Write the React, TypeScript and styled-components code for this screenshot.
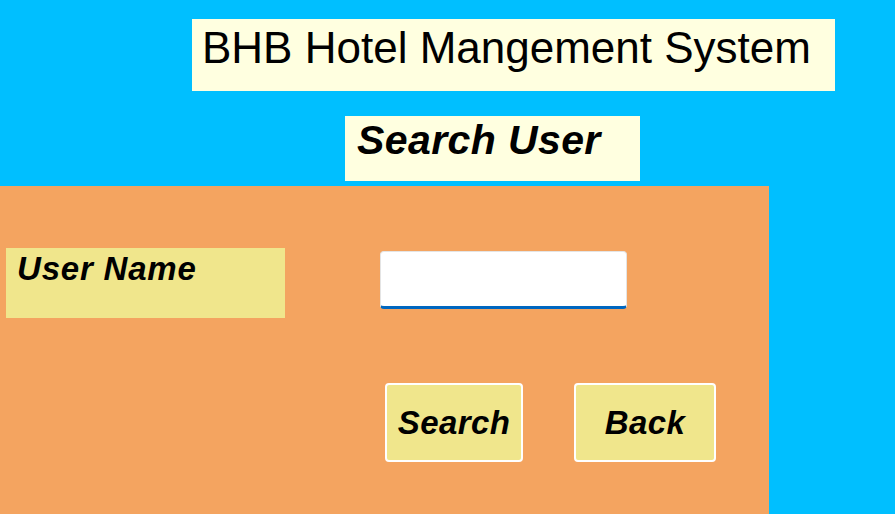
import React from "react";
import styled, { createGlobalStyle } from "styled-components";

const GlobalStyle = createGlobalStyle`
  html, body {
    margin: 0;
    padding: 0;
    background: #00bfff;
    font-family: "Liberation Sans", Arial, sans-serif;
  }
  #root { width: 895px; height: 514px; }
`;

const Page = styled.div`
  width: 895px;
  height: 514px;
  background: #00bfff;
  display: flex;
  flex-direction: column;
  overflow: hidden;
`;

const HeaderRow = styled.div<{ $top: number; $left: number }>`
  display: flex;
  padding-top: ${(p) => p.$top}px;
  padding-left: ${(p) => p.$left}px;
`;

const TitleBox = styled.div`
  width: 643px;
  height: 72px;
  box-sizing: border-box;
  background: #ffffe0;
  padding: 7px 0 0 10px;
  font-size: 44px;
  line-height: 44px;
  color: #000;
  white-space: nowrap;
`;

const SubtitleBox = styled.div`
  width: 295px;
  height: 65px;
  box-sizing: border-box;
  background: #ffffe0;
  padding: 4px 0 0 12px;
  font-size: 41px;
  line-height: 41px;
  font-weight: bold;
  font-style: italic;
  letter-spacing: 0.4px;
  color: #000;
  white-space: nowrap;
`;

const Panel = styled.div`
  margin-top: 5px;
  width: 769px;
  flex: 1;
  background: #f4a460;
  padding: 62px 0 0 6px;
  box-sizing: border-box;
  display: flex;
  flex-direction: column;
`;

const FieldRow = styled.div`
  display: flex;
  align-items: flex-start;
`;

const FieldLabel = styled.div`
  width: 279px;
  height: 70px;
  box-sizing: border-box;
  background: #f0e68c;
  padding: 4px 0 0 11px;
  font-size: 33px;
  line-height: 33px;
  font-weight: bold;
  font-style: italic;
  letter-spacing: 0.8px;
  color: #000;
  white-space: nowrap;
`;

const TextInput = styled.input`
  margin: 3px 0 0 95px;
  width: 247px;
  height: 58px;
  box-sizing: border-box;
  background: #fff;
  border: 1px solid #e4e4e4;
  border-bottom: 3px solid #0067c0;
  border-radius: 4px;
  outline: none;
  padding: 0 8px;
  font-size: 20px;
  font-family: "Liberation Sans", Arial, sans-serif;
`;

const ButtonRow = styled.div`
  display: flex;
  gap: 51px;
  margin-top: 65px;
  padding-left: 379px;
`;

const ActionButton = styled.button<{ $w: number }>`
  width: ${(p) => p.$w}px;
  height: 79px;
  box-sizing: border-box;
  background: #f0e68c;
  border: 2px solid #fff;
  border-radius: 4px;
  padding: 0;
  font-family: "Liberation Sans", Arial, sans-serif;
  font-size: 33px;
  font-weight: bold;
  font-style: italic;
  letter-spacing: 0.4px;
  color: #000;
  display: flex;
  align-items: center;
  justify-content: center;
  cursor: pointer;
`;

export default function App() {
  return (
    <>
      <GlobalStyle />
      <Page>
        <HeaderRow $top={19} $left={192}>
          <TitleBox>BHB Hotel Mangement System</TitleBox>
        </HeaderRow>
        <HeaderRow $top={25} $left={345}>
          <SubtitleBox>Search User</SubtitleBox>
        </HeaderRow>
        <Panel>
          <FieldRow>
            <FieldLabel>User Name</FieldLabel>
            <TextInput type="text" />
          </FieldRow>
          <ButtonRow>
            <ActionButton $w={138}>Search</ActionButton>
            <ActionButton $w={142}>Back</ActionButton>
          </ButtonRow>
        </Panel>
      </Page>
    </>
  );
}
